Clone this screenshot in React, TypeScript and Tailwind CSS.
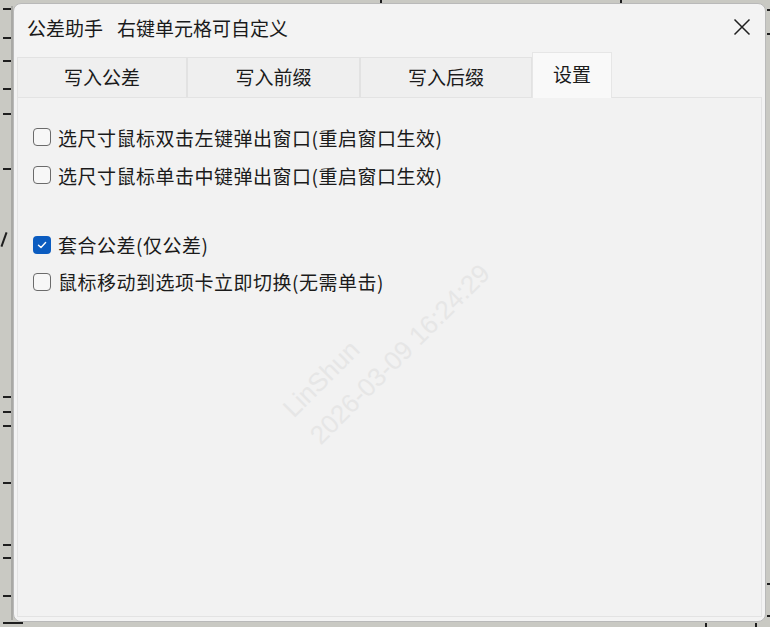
const FONT = { fontFamily: '"Noto Sans CJK SC", "Noto Sans", sans-serif' };

const tabs = [
  { label: '写入公差', w: 'w-[170px]' },
  { label: '写入前缀', w: 'w-[173px]' },
  { label: '写入后缀', w: 'w-[172px]' },
];

const leftTicks = [8, 37, 60, 88, 113, 168, 396, 411, 425, 482, 544, 557, 595];

function Checkbox({ checked }: { checked?: boolean }) {
  if (checked) {
    return (
      <span className="flex w-[18px] h-[18px] shrink-0 items-center justify-center rounded-[4px] bg-[#0b5cc0]">
        <svg width="12" height="12" viewBox="0 0 12 12" fill="none">
          <path d="M2.5 6.2 L5 8.5 L9.6 3.6" stroke="#fff" strokeWidth="1.4" strokeLinecap="round" strokeLinejoin="round" />
        </svg>
      </span>
    );
  }
  return <span className="block w-[18px] h-[18px] shrink-0 rounded-[4px] border border-[#6b6b6b] bg-[#f7f7f7]" />;
}

function Row({ label, checked, h }: { label: string; checked?: boolean; h: string }) {
  return (
    <div className={`flex items-center gap-[7px] ${h}`}>
      <Checkbox checked={checked} />
      <span className="text-[19px] leading-none tracking-[0.5px] text-[#1b1b1b]">{label}</span>
    </div>
  );
}

export default function App() {
  return (
    <div className="relative w-[770px] h-[627px] overflow-hidden bg-[#c9c9c3] pl-[13px] pt-[3px]" style={FONT}>
      {/* drawing behind the dialog */}
      {leftTicks.map((y) => (
        <div key={y} className="absolute left-[3px] w-[9px] h-[2px] bg-[#1e1e1e]" style={{ top: y }} />
      ))}
      <div className="absolute left-[3px] top-[232px] w-[2px] h-[15px] rotate-[20deg] bg-[#1e1e1e]" />
      <div className="absolute left-[3px] top-[622px] w-[20px] h-[2px] bg-[#1e1e1e]" />
      <div className="absolute left-[380px] top-0 w-[2px] h-[3px] bg-[#1e1e1e]" />
      <div className="absolute left-[620px] top-0 w-[2px] h-[3px] bg-[#1e1e1e]" />
      <div className="absolute left-[705px] top-[623px] w-[2px] h-[4px] bg-[#1e1e1e]" />
      <div className="absolute left-[755px] top-[623px] w-[2px] h-[4px] bg-[#1e1e1e]" />
      {[9, 33, 583, 615].map((y) => (
        <div key={y} className="absolute left-[767px] w-[3px] h-[2px] bg-[#1e1e1e]" style={{ top: y }} />
      ))}
      <div className="absolute left-[11px] top-[6px] w-[2px] h-[614px] bg-[#a9a9a5]" />

      {/* dialog */}
      <div className="relative flex flex-col w-[753px] h-[619px] rounded-[8px] border border-[#b9b9b9] bg-[#f3f3f3]">
        <div className="flex items-center justify-between h-[49px] pb-[3px] pl-[13px] pr-[14px]">
          <span className="text-[19px] leading-none text-[#1a1a1a]">
            公差助手<span className="inline-block w-[14px]" />右键单元格可自定义
          </span>
          <svg width="18" height="18" viewBox="0 0 18 18" fill="none">
            <path d="M1.5 1.5 L16.5 16.5 M16.5 1.5 L1.5 16.5" stroke="#202020" strokeWidth="1.5" />
          </svg>
        </div>

        <div className="flex items-end h-[44px] mx-[3px]">
          {tabs.map((t) => (
            <div
              key={t.label}
              className={`flex items-center justify-center h-[40px] pb-[3px] ${t.w} border border-b-0 border-[#e2e2e2] bg-[#efefef] text-[19px] leading-none text-[#1b1b1b]`}
            >
              {t.label}
            </div>
          ))}
          <div className="relative z-10 -mb-px flex items-center justify-center h-[46px] w-[80px] pb-[5px] border border-b-0 border-[#e6e6e6] bg-[#f9f9f9] text-[19px] leading-none text-[#1b1b1b]">
            设置
          </div>
        </div>

        <div className="flex-1 mx-[3px] mb-[4px] border border-[#e3e3e3] bg-[#f2f2f2] pt-[20px] pl-[15px]">
          <Row h="h-[38px]" label="选尺寸鼠标双击左键弹出窗口(重启窗口生效)" />
          <Row h="h-[38px]" label="选尺寸鼠标单击中键弹出窗口(重启窗口生效)" />
          <div className="h-[32px]" />
          <Row h="h-[37px]" checked label="套合公差(仅公差)" />
          <Row h="h-[37px]" label="鼠标移动到选项卡立即切换(无需单击)" />
        </div>

        {/* watermark */}
        <div
          className="pointer-events-none absolute left-[260px] top-[395px] origin-top-left -rotate-45 text-[26px] leading-[38px] text-[#e6e6e6] whitespace-nowrap"
          style={{ fontFamily: '"Liberation Sans", sans-serif' }}
        >
          <div>LinShun</div>
          <div>2026-03-09 16:24:29</div>
        </div>
      </div>
    </div>
  );
}
